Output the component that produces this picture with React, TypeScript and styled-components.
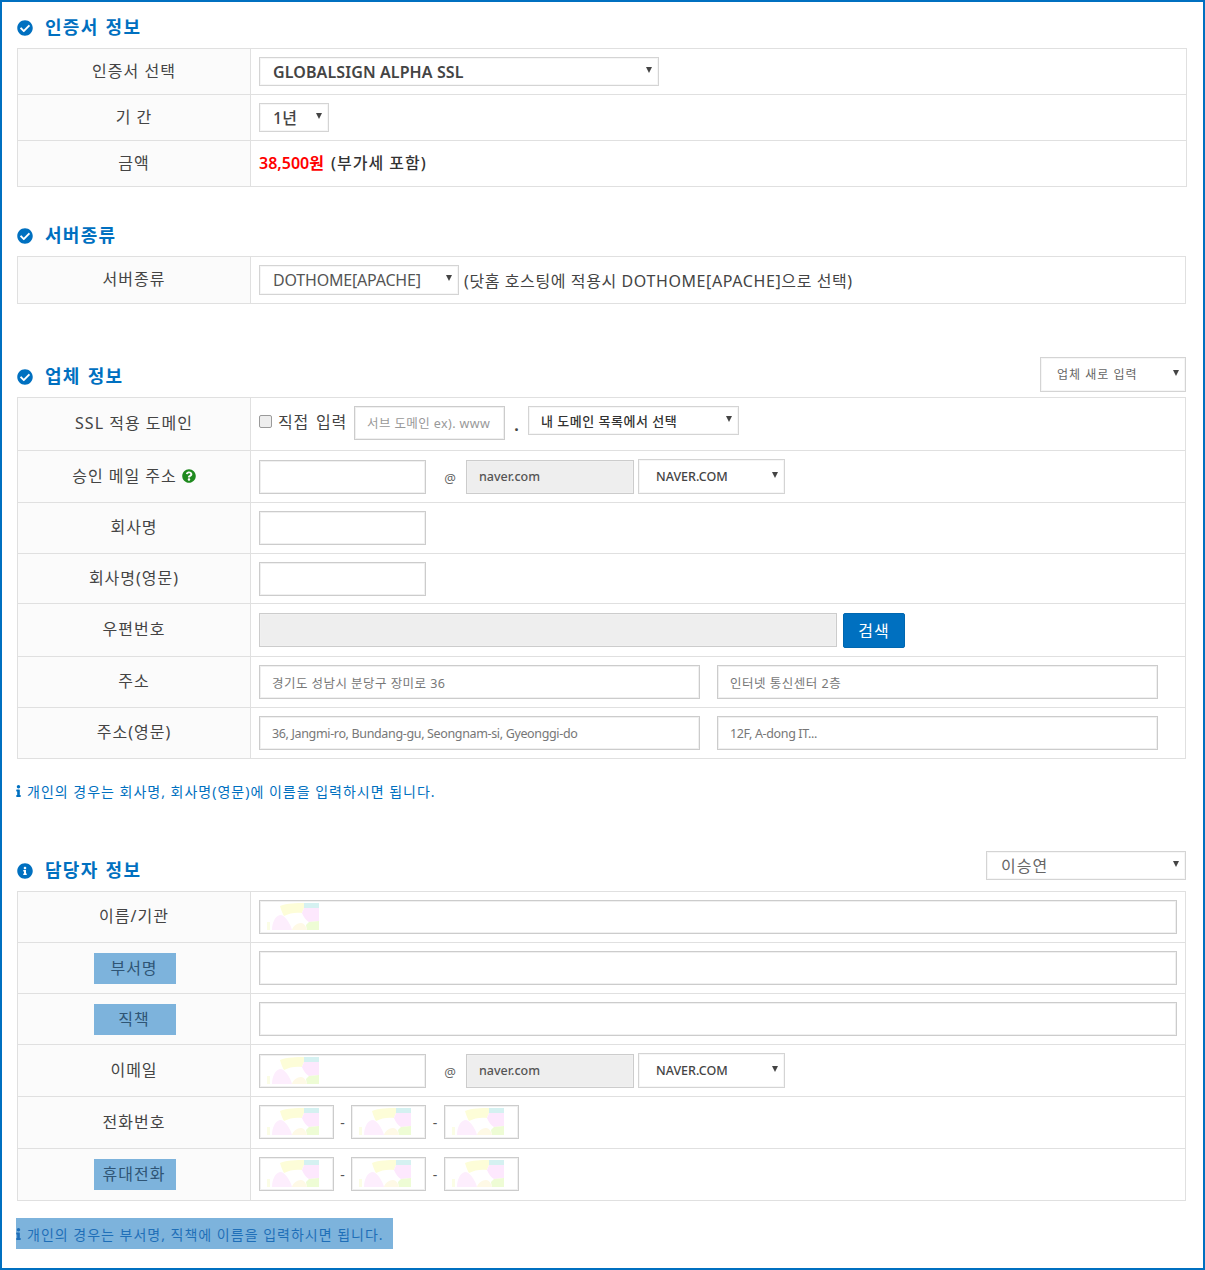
import React, { FC } from 'react';
import styled, { createGlobalStyle } from 'styled-components';
import { FaCheckCircle, FaInfo, FaInfoCircle, FaQuestionCircle } from 'react-icons/fa';

const BLUE = '#0070c0';
const FONT = '"Noto Sans", "Noto Sans CJK KR", sans-serif';

const GlobalStyle = createGlobalStyle`
  html, body {
    margin: 0;
    padding: 0;
    background: #fff;
    font-family: ${FONT};
    color: #333;
  }
  input, select, button {
    font-family: ${FONT};
  }
`;

const Frame = styled.div`
  box-sizing: border-box;
  width: 1205px;
  height: 1270px;
  padding: 4px 17px 0 15px;
  border: 2px solid ${BLUE};
  overflow: hidden;
`;

const Section = styled.section<{ $top?: number }>`
  margin-top: ${p => p.$top ?? 0}px;
`;

const SectionHead = styled.div`
  height: 42px;
  display: flex;
  align-items: flex-start;
  justify-content: space-between;
`;

const Heading = styled.h2`
  margin: 0;
  align-self: center;
  display: flex;
  align-items: center;
  gap: 12px;
  color: ${BLUE};
  font-size: 18px;
  line-height: 24px;
  font-weight: 700;
  letter-spacing: 1.3px;
  word-spacing: 1px;
`;

const HeadIcon = styled.span`
  display: flex;
  font-size: 16px;
  margin-top: 2px;
`;

const Table = styled.table<{ $width: number }>`
  width: ${p => p.$width}px;
  table-layout: fixed;
  border-collapse: collapse;
  background: #fff;
`;

const Row = styled.tr<{ $h: number }>`
  height: ${p => p.$h}px;
`;

const Label = styled.th`
  width: 232px;
  padding: 0 0 4px;
  background: #fbfbfb;
  border: 1px solid #e0e0e0;
  font-size: 16px;
  font-weight: 400;
  letter-spacing: 1px;
  color: #444;
  text-align: center;
  vertical-align: middle;
`;

const Selected = styled.span`
  display: block;
  box-sizing: border-box;
  width: 82px;
  height: 31px;
  margin: 0 74px -4px 76px;
  padding-right: 2px;
  line-height: 30px;
  background: #7db3dc;
  color: #2f5575;
`;

const Cell = styled.td`
  padding: 0 8px;
  border: 1px solid #e0e0e0;
  vertical-align: middle;
`;

const Fields = styled.div<{ $align?: string; $bottom?: number }>`
  display: flex;
  align-items: ${p => p.$align ?? 'center'};
  padding-bottom: ${p => p.$bottom ?? 0}px;
`;

const Box = styled.div<{ $w: string; $left?: number }>`
  position: relative;
  flex: none;
  width: ${p => p.$w};
  margin-left: ${p => p.$left ?? 0}px;
`;

const Input = styled.input<{ $spacing?: number }>`
  display: block;
  box-sizing: border-box;
  width: 100%;
  height: 34px;
  padding: 0 12px;
  border: 1px solid #ccc;
  border-radius: 0;
  outline: none;
  background: #fff;
  box-shadow: inset 0 0 0 1px #f0f0f0;
  font-size: 12.5px;
  letter-spacing: ${p => p.$spacing ?? 0}px;
  color: #777;

  &::placeholder {
    color: #999;
    opacity: 1;
  }

  &:disabled {
    background: #eee;
    color: #555;
    font-weight: 500;
  }
`;

const SelectBox = styled.div<{ $w: number; $h: number; $left?: number; $top?: number }>`
  position: relative;
  flex: none;
  width: ${p => p.$w}px;
  height: ${p => p.$h}px;
  margin-left: ${p => p.$left ?? 0}px;
  margin-top: ${p => p.$top ?? 0}px;

  &::after {
    content: '';
    position: absolute;
    right: 7px;
    top: 50%;
    margin-top: -5px;
    border-left: 3px solid transparent;
    border-right: 3px solid transparent;
    border-top: 6px solid #444;
    pointer-events: none;
  }
`;

const Select = styled.select<{ $size?: number; $weight?: number; $pad?: number; $color?: string; $spacing?: number }>`
  display: block;
  box-sizing: border-box;
  width: 100%;
  height: 100%;
  padding: 0 0 0 ${p => p.$pad ?? 13}px;
  appearance: none;
  border: 1px solid #d4d4d4;
  border-radius: 0;
  background: #fff;
  box-shadow: inset 0 0 0 1px #f6f6f6;
  outline: none;
  font-size: ${p => p.$size ?? 16}px;
  font-weight: ${p => p.$weight ?? 400};
  letter-spacing: ${p => p.$spacing ?? 0}px;
  color: ${p => p.$color ?? '#555'};
`;

const Price = styled.div`
  padding-bottom: 3px;
  font-size: 16px;
  font-weight: 600;
  color: #333;
`;

const Red = styled.span`
  color: #f00;
  margin-right: 7px;
`;

const Tax = styled.span`
  font-weight: 500;
  letter-spacing: 1px;
`;

const Hint = styled.span`
  margin-left: 5px;
  font-size: 16px;
  color: #444;
  letter-spacing: 0.6px;
  white-space: nowrap;
`;

const CheckLabel = styled.label`
  display: flex;
  align-items: center;
  width: 95px;
  height: 30px;
  font-size: 16px;
  letter-spacing: 0.8px;
  word-spacing: 2px;
  color: #444;
`;

const Check = styled.input`
  box-sizing: border-box;
  width: 13px;
  height: 13px;
  margin: 0 6px 0 0;
  appearance: none;
  border: 1px solid #9a9a9a;
  border-radius: 2px;
  background: #eee;
`;

const Dot = styled.span`
  width: 23px;
  padding-top: 8px;
  text-align: center;
  font-size: 16px;
  font-weight: 700;
  color: #444;
`;

const At = styled.span`
  width: 40px;
  box-sizing: border-box;
  flex: none;
  padding: 3px 0 0 8px;
  text-align: center;
  font-size: 13px;
  color: #666;
`;

const Dash = styled.span<{ $w?: number }>`
  width: ${p => p.$w ?? 17}px;
  flex: none;
  text-align: center;
  font-size: 14px;
  color: #555;
`;

const Button = styled.button`
  flex: none;
  width: 62px;
  height: 35px;
  margin-left: 6px;
  padding: 0;
  border: 1px solid #0067b0;
  border-radius: 2px;
  background: ${BLUE};
  color: #fff;
  font-size: 16px;
  letter-spacing: 1px;
`;

const Help = styled.span`
  margin-left: 5px;
  color: #1f8a1f;
  font-size: 14px;
  vertical-align: -1px;
`;

const Note = styled.p<{ $selected?: boolean; $top: number }>`
  display: flex;
  align-items: center;
  width: ${p => (p.$selected ? '377px' : 'auto')};
  height: ${p => (p.$selected ? 31 : 20)}px;
  margin: ${p => p.$top}px 0 0 -1px;
  background: ${p => (p.$selected ? '#7db3dc' : 'transparent')};
  color: ${p => (p.$selected ? '#1f6fb8' : BLUE)};
  font-size: 14px;
  letter-spacing: 1px;
  white-space: nowrap;
`;

const NoteIcon = styled.span`
  display: flex;
  width: 11px;

  svg {
    width: 5px;
    height: 12px;
  }
`;

const Blot = styled.svg`
  position: absolute;
  left: 8px;
  top: 3px;
  pointer-events: none;
`;

const Blotch: FC = () => (
  <Blot width="52" height="27" viewBox="0 0 52 27">
    <path d="M0 19 L3 19 L3 27 L0 27Z" fill="#fbfde6" />
    <path d="M13 3 C20 0 30 0 37 0 L37 5 C36 7 35 9 35 10 C30 9 22 10 17 13 C15 10 14 6 13 3Z" fill="#fdfdd8" />
    <path d="M37 0 L52 0 L52 5 L37 5Z" fill="#d5f1f1" />
    <path d="M37 5 L52 5 L52 18 L42 19 C38 17 36 12 35 10Z" fill="#fde8fd" />
    <path d="M40 27 L39 22 L42 19 L52 18 L52 27Z" fill="#eefcd5" />
    <path d="M25 27 C26 23 30 20 34 20 C37 20 39 23 40 27Z" fill="#fef9e6" />
    <path d="M5 27 C5 20 8 13 13 12 C18 12 23 20 25 27Z" fill="#fdeefd" />
  </Blot>
);

const Masked: FC<{ w: string; left?: number }> = ({ w, left }) => (
  <Box $w={w} $left={left}>
    <Input readOnly />
    <Blotch />
  </Box>
);

const MailDomain: FC = () => (
  <>
    <At>@</At>
    <Box $w="168px">
      <Input disabled value="naver.com" readOnly />
    </Box>
    <SelectBox $w={147} $h={35} $left={4}>
      <Select $size={12.5} $weight={500} $pad={17} $color="#444">
        <option>NAVER.COM</option>
      </Select>
    </SelectBox>
  </>
);

const Phone: FC = () => (
  <Fields $bottom={1}>
    <Masked w="75px" />
    <Dash>-</Dash>
    <Masked w="75px" />
    <Dash $w={18}>-</Dash>
    <Masked w="75px" />
  </Fields>
);

const App: FC = () => (
  <Frame>
    <GlobalStyle />

    <Section>
      <SectionHead>
        <Heading>
          <HeadIcon><FaCheckCircle /></HeadIcon>
          인증서 정보
        </Heading>
      </SectionHead>
      <Table $width={1170}>
        <tbody>
          <Row $h={46}>
            <Label>인증서 선택</Label>
            <Cell>
              <SelectBox $w={400} $h={29}>
                <Select $weight={600} $color="#444" $spacing={0.1}>
                  <option>GLOBALSIGN ALPHA SSL</option>
                </Select>
              </SelectBox>
            </Cell>
          </Row>
          <Row $h={46}>
            <Label>기 간</Label>
            <Cell>
              <SelectBox $w={70} $h={29}>
                <Select $weight={500} $color="#444">
                  <option>1년</option>
                </Select>
              </SelectBox>
            </Cell>
          </Row>
          <Row $h={46}>
            <Label>금액</Label>
            <Cell>
              <Price>
                <Red>38,500원</Red>
                <Tax>(부가세 포함)</Tax>
              </Price>
            </Cell>
          </Row>
        </tbody>
      </Table>
    </Section>

    <Section $top={27}>
      <SectionHead>
        <Heading>
          <HeadIcon><FaCheckCircle /></HeadIcon>
          서버종류
        </Heading>
      </SectionHead>
      <Table $width={1169}>
        <tbody>
          <Row $h={47}>
            <Label>서버종류</Label>
            <Cell>
              <Fields>
                <SelectBox $w={200} $h={30}>
                  <Select $spacing={-0.2}>
                    <option>DOTHOME[APACHE]</option>
                  </Select>
                </SelectBox>
                <Hint>(닷홈 호스팅에 적용시 DOTHOME[APACHE]으로 선택)</Hint>
              </Fields>
            </Cell>
          </Row>
        </tbody>
      </Table>
    </Section>

    <Section $top={51}>
      <SectionHead>
        <Heading>
          <HeadIcon><FaCheckCircle /></HeadIcon>
          업체 정보
        </Heading>
        <SelectBox $w={146} $h={35} $top={2}>
          <Select $size={12} $pad={16} $color="#666" $spacing={1}>
            <option>업체 새로 입력</option>
          </Select>
        </SelectBox>
      </SectionHead>
      <Table $width={1169}>
        <tbody>
          <Row $h={53}>
            <Label>SSL 적용 도메인</Label>
            <Cell>
              <Fields $align="flex-start" $bottom={2}>
                <CheckLabel>
                  <Check type="checkbox" />
                  직접 입력
                </CheckLabel>
                <Box $w="151px">
                  <Input placeholder="서브 도메인 ex). www" $spacing={0.4} />
                </Box>
                <Dot>.</Dot>
                <SelectBox $w={211} $h={29}>
                  <Select $size={13} $weight={500} $pad={12} $color="#333" $spacing={0.5}>
                    <option>내 도메인 목록에서 선택</option>
                  </Select>
                </SelectBox>
              </Fields>
            </Cell>
          </Row>
          <Row $h={52}>
            <Label>
              승인 메일 주소
              <Help><FaQuestionCircle /></Help>
            </Label>
            <Cell>
              <Fields>
                <Box $w="167px"><Input /></Box>
                <MailDomain />
              </Fields>
            </Cell>
          </Row>
          <Row $h={51}>
            <Label>회사명</Label>
            <Cell><Box $w="167px"><Input /></Box></Cell>
          </Row>
          <Row $h={50}>
            <Label>회사명(영문)</Label>
            <Cell><Box $w="167px"><Input /></Box></Cell>
          </Row>
          <Row $h={53}>
            <Label>우편번호</Label>
            <Cell>
              <Fields>
                <Box $w="578px"><Input disabled /></Box>
                <Button>검색</Button>
              </Fields>
            </Cell>
          </Row>
          <Row $h={51}>
            <Label>주소</Label>
            <Cell>
              <Fields>
                <Box $w="441px"><Input readOnly value="경기도 성남시 분당구 장미로 36" $spacing={0.45} /></Box>
                <Box $w="441px" $left={17}><Input readOnly value="인터넷 통신센터 2층" $spacing={0.5} /></Box>
              </Fields>
            </Cell>
          </Row>
          <Row $h={51}>
            <Label>주소(영문)</Label>
            <Cell>
              <Fields>
                <Box $w="441px"><Input readOnly value="36, Jangmi-ro, Bundang-gu, Seongnam-si, Gyeonggi-do" $spacing={-0.35} /></Box>
                <Box $w="441px" $left={17}><Input readOnly value="12F, A-dong IT..." $spacing={-0.35} /></Box>
              </Fields>
            </Cell>
          </Row>
        </tbody>
      </Table>
      <Note $top={22}>
        <NoteIcon><FaInfo /></NoteIcon>
        개인의 경우는 회사명, 회사명(영문)에 이름을 입력하시면 됩니다.
      </Note>
    </Section>

    <Section $top={48}>
      <SectionHead>
        <Heading>
          <HeadIcon><FaInfoCircle /></HeadIcon>
          담당자 정보
        </Heading>
        <SelectBox $w={200} $h={29} $top={2}>
          <Select $pad={14} $color="#666" $spacing={1}>
            <option>이승연</option>
          </Select>
        </SelectBox>
      </SectionHead>
      <Table $width={1169}>
        <tbody>
          <Row $h={51}>
            <Label>이름/기관</Label>
            <Cell><Masked w="918px" /></Cell>
          </Row>
          <Row $h={51}>
            <Label><Selected>부서명</Selected></Label>
            <Cell><Box $w="918px"><Input /></Box></Cell>
          </Row>
          <Row $h={51}>
            <Label><Selected>직책</Selected></Label>
            <Cell><Box $w="918px"><Input /></Box></Cell>
          </Row>
          <Row $h={52}>
            <Label>이메일</Label>
            <Cell>
              <Fields>
                <Masked w="167px" />
                <MailDomain />
              </Fields>
            </Cell>
          </Row>
          <Row $h={52}>
            <Label>전화번호</Label>
            <Cell><Phone /></Cell>
          </Row>
          <Row $h={52}>
            <Label><Selected>휴대전화</Selected></Label>
            <Cell><Phone /></Cell>
          </Row>
        </tbody>
      </Table>
      <Note $selected $top={17}>
        <NoteIcon><FaInfo /></NoteIcon>
        개인의 경우는 부서명, 직책에 이름을 입력하시면 됩니다.
      </Note>
    </Section>
  </Frame>
);

export default App;
